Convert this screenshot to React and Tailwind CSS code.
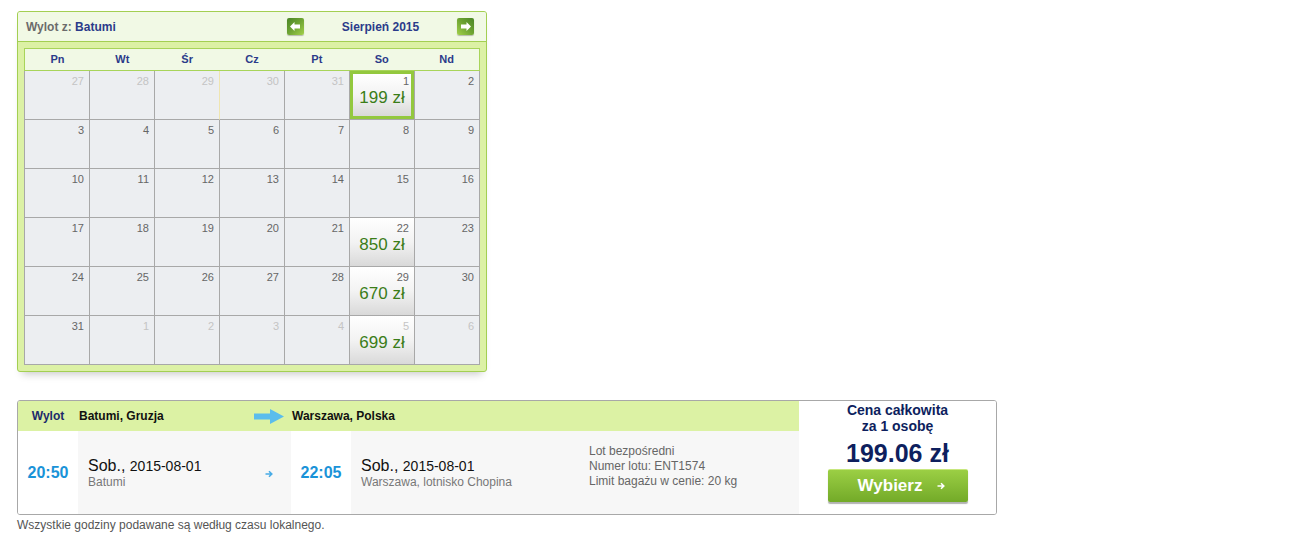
import React from "react";

const FONT = { fontFamily: '"Liberation Sans", Arial, sans-serif' };

const weeks = [
  [
    { d: 27, o: true }, { d: 28, o: true }, { d: 29, o: true, edge: true }, { d: 30, o: true }, { d: 31, o: true },
    { d: 1, p: "199 zł", sel: true }, { d: 2 },
  ],
  [{ d: 3 }, { d: 4 }, { d: 5 }, { d: 6 }, { d: 7 }, { d: 8 }, { d: 9 }],
  [{ d: 10 }, { d: 11 }, { d: 12 }, { d: 13 }, { d: 14 }, { d: 15 }, { d: 16 }],
  [{ d: 17 }, { d: 18 }, { d: 19 }, { d: 20 }, { d: 21 }, { d: 22, p: "850 zł" }, { d: 23 }],
  [{ d: 24 }, { d: 25 }, { d: 26 }, { d: 27 }, { d: 28 }, { d: 29, p: "670 zł" }, { d: 30 }],
  [
    { d: 31 }, { d: 1, o: true }, { d: 2, o: true }, { d: 3, o: true }, { d: 4, o: true },
    { d: 5, o: true, p: "699 zł" }, { d: 6, o: true },
  ],
];

const dayNames = ["Pn", "Wt", "Śr", "Cz", "Pt", "So", "Nd"];

function NavButton({ dir }) {
  const grad =
    dir === "left"
      ? "bg-gradient-to-br from-[#4a8526] via-[#6fa533] to-[#a3d14b]"
      : "bg-gradient-to-bl from-[#4a8526] via-[#6fa533] to-[#a3d14b]";
  return (
    <div className={`w-[17px] h-[17px] rounded-[2px] ${grad} flex items-center justify-center shadow-[0_1px_1px_rgba(0,0,0,0.25)]`}>
      <svg width="11" height="9" viewBox="0 0 11 9">
        {dir === "left" ? (
          <polygon points="0,4.5 4.5,0 4.5,2.5 10,2.5 10,6.5 4.5,6.5 4.5,9" fill="#fff" />
        ) : (
          <polygon points="11,4.5 6.5,0 6.5,2.5 1,2.5 1,6.5 6.5,6.5 6.5,9" fill="#fff" />
        )}
      </svg>
    </div>
  );
}

function DayCell({ c }) {
  const numColor = c.o ? "text-[#c4c4c4]" : "text-[#666]";
  const rightBorder = c.edge ? "border-r-[#efe5b0]" : "border-r-[#a8a8a8]";
  if (c.p) {
    return (
      <div className={`w-[65px] h-[49px] border-r border-b border-b-[#a8a8a8] ${rightBorder} bg-[#eceef1]`}>
        <div
          className={`w-full h-full flex flex-col bg-gradient-to-b from-[#ffffff] via-[#f3f3f3] to-[#d9d9d9] ${
            c.sel ? "border-[3px] border-[#93c83e]" : ""
          }`}
        >
          <div className={`text-right text-[11px] leading-[13px] ${c.sel ? "pt-[1px] pr-[2px]" : "pt-[4px] pr-[5px]"} ${numColor}`}>
            {c.d}
          </div>
          <div className="text-center text-[17px] leading-[20px] text-[#3b7d18]">{c.p}</div>
        </div>
      </div>
    );
  }
  return (
    <div className={`w-[65px] h-[49px] border-r border-b border-b-[#a8a8a8] ${rightBorder} bg-[#eceef1]`}>
      <div className={`text-right text-[11px] leading-[13px] pt-[4px] pr-[5px] ${numColor}`}>{c.d}</div>
    </div>
  );
}

function Calendar() {
  return (
    <div className="w-[470px] h-[361px] border border-[#a3cf52] rounded-[3px] bg-[#dcf1a5] shadow-[0_7px_8px_-5px_rgba(0,0,0,0.22)] flex flex-col overflow-hidden">
      <div className="h-[30px] shrink-0 bg-[#f1f9e5] border-b border-[#a3cf52] flex items-center justify-between pl-[8px] pr-[12px] text-[12px] font-bold">
        <div>
          <span className="text-[#6b6b6b]">Wylot z: </span>
          <span className="text-[#2b3b8a]">Batumi</span>
        </div>
        <div className="flex items-center w-[187px] justify-between">
          <NavButton dir="left" />
          <span className="text-[#2b3b8a]">Sierpień 2015</span>
          <NavButton dir="right" />
        </div>
      </div>
      <div className="pt-[6px] px-[6px]">
        <div className="h-[23px] border border-[#a8d45a] bg-[#f1f9e5] flex items-center">
          {dayNames.map((n) => (
            <div key={n} className="flex-1 text-center text-[11px] font-bold text-[#2b3b8a]">
              {n}
            </div>
          ))}
        </div>
        <div className="border-l border-[#a8a8a8] flex flex-col">
          {weeks.map((w, i) => (
            <div key={i} className="flex">
              {w.map((c, j) => (
                <DayCell key={j} c={c} />
              ))}
            </div>
          ))}
        </div>
      </div>
    </div>
  );
}

function BigArrow() {
  return (
    <svg width="30" height="15" viewBox="0 0 30 15">
      <polygon points="0,4.5 16,4.5 16,0 30,7.5 16,15 16,10.5 0,10.5" fill="#5bbdec" />
    </svg>
  );
}

function SmallArrow({ color }) {
  return (
    <svg width="8" height="8" viewBox="0 0 8 8">
      <path d="M0.5 4 H6.5 M4 1.2 L6.8 4 L4 6.8" stroke={color} strokeWidth="1.6" fill="none" />
    </svg>
  );
}

function FlightCard() {
  return (
    <div className="w-[980px] h-[115px] border border-[#a8a8a8] rounded-[3px] flex overflow-hidden">
      <div className="w-[781px] flex flex-col">
        <div className="h-[30px] bg-[#dcf2a4] flex items-center text-[12px] font-bold">
          <div className="w-[60px] text-center text-[#1c2a6b]">Wylot</div>
          <div className="w-[213px] flex items-center justify-between pl-[1px] pr-[7px] text-[#111]">
            <span>Batumi, Gruzja</span>
            <BigArrow />
          </div>
          <div className="pl-[1px] text-[#111]">Warszawa, Polska</div>
        </div>
        <div className="flex-1 flex">
          <div className="w-[60px] bg-white flex items-center justify-center text-[16px] font-bold text-[#1a93d8]">20:50</div>
          <div className="w-[213px] bg-[#f7f7f7] flex items-center justify-between pl-[10px] pr-[18px]">
            <div className="flex flex-col">
              <span className="text-[#111] leading-[18px]">
                <span className="text-[16px]">Sob.,</span> <span className="text-[14px]">2015-08-01</span>
              </span>
              <span className="text-[12px] text-[#777] leading-[14px]">Batumi</span>
            </div>
            <div className="pt-[2px]">
              <SmallArrow color="#49ace6" />
            </div>
          </div>
          <div className="w-[60px] bg-white flex items-center justify-center text-[16px] font-bold text-[#1a93d8]">22:05</div>
          <div className="flex-1 bg-[#f7f7f7] flex items-center pl-[10px]">
            <div className="w-[228px] flex flex-col">
              <span className="text-[#111] leading-[18px]">
                <span className="text-[16px]">Sob.,</span> <span className="text-[14px]">2015-08-01</span>
              </span>
              <span className="text-[12px] text-[#777] leading-[14px]">Warszawa, lotnisko Chopina</span>
            </div>
            <div className="flex flex-col text-[12px] leading-[15px] text-[#666] pb-[13px]">
              <span>Lot bezpośredni</span>
              <span>Numer lotu: ENT1574</span>
              <span>Limit bagażu w cenie: 20 kg</span>
            </div>
          </div>
        </div>
      </div>
      <div className="flex-1 bg-white flex flex-col items-center pt-[1px]">
        <div className="text-[14px] leading-[16px] font-bold text-[#0e1f5e] text-center">
          Cena całkowita
          <br />
          za 1 osobę
        </div>
        <div className="text-[25px] leading-[30px] font-bold text-[#0e1f5e] mt-[4px]">199.06 zł</div>
        <div className="mt-[1px] w-[140px] h-[33px] rounded-[2px] bg-gradient-to-b from-[#9bcf44] to-[#73aa28] shadow-[0_2px_1px_rgba(0,0,0,0.3)] border-t border-[#c7e77e] flex items-center justify-center gap-[15px] pl-[8px]">
          <span className="text-white font-bold text-[17px]">Wybierz</span>
          <SmallArrow color="#fff" />
        </div>
      </div>
    </div>
  );
}

export default function App() {
  return (
    <div className="w-[1308px] h-[542px] bg-white pl-[17px] pt-[11px]" style={FONT}>
      <Calendar />
      <div className="mt-[28px]">
        <FlightCard />
      </div>
      <div className="text-[12px] text-[#555] mt-[1px]">Wszystkie godziny podawane są według czasu lokalnego.</div>
    </div>
  );
}
